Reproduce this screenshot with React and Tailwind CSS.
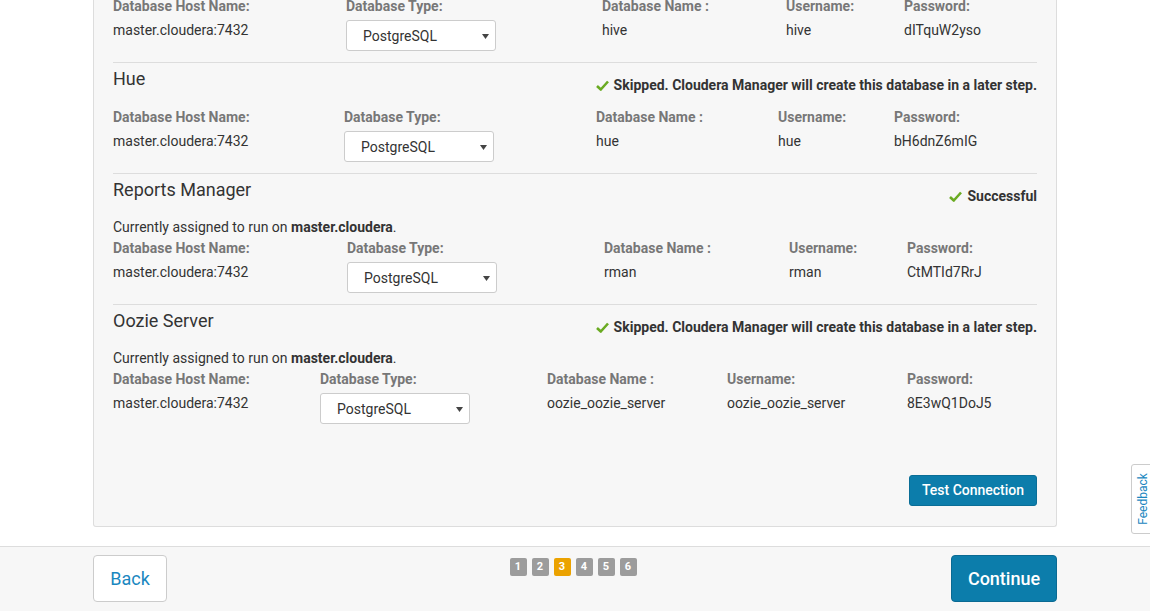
import { useState } from 'react';

const ROWS = [
  {
    key: 'hive',
    cols: 'grid-cols-[233px_256px_184px_118px_1fr]',
    host: 'master.cloudera:7432',
    name: 'hive', user: 'hive', password: 'dITquW2yso',
  },
  {
    key: 'hue',
    title: 'Hue',
    status: 'Skipped. Cloudera Manager will create this database in a later step.',
    cols: 'grid-cols-[231px_252px_182px_116px_1fr]',
    host: 'master.cloudera:7432',
    name: 'hue', user: 'hue', password: 'bH6dnZ6mIG',
  },
  {
    key: 'rman',
    title: 'Reports Manager',
    status: 'Successful',
    assigned: 'master.cloudera',
    cols: 'grid-cols-[234px_257px_185px_118px_1fr]',
    host: 'master.cloudera:7432',
    name: 'rman', user: 'rman', password: 'CtMTId7RrJ',
  },
  {
    key: 'oozie',
    title: 'Oozie Server',
    status: 'Skipped. Cloudera Manager will create this database in a later step.',
    assigned: 'master.cloudera',
    cols: 'grid-cols-[207px_227px_180px_180px_1fr]',
    host: 'master.cloudera:7432',
    name: 'oozie_oozie_server', user: 'oozie_oozie_server', password: '8E3wQ1DoJ5',
  },
];

function Check() {
  return (
    <svg width="13" height="11" viewBox="0 0 13 11" className="mr-[5px] shrink-0">
      <path d="M1 6 L4.8 9.5 L12 1.5" fill="none" stroke="#6aab22" strokeWidth="2.6" strokeLinejoin="round" />
    </svg>
  );
}

function Select() {
  const [value] = useState('PostgreSQL');
  return (
    <div className="w-[150px] h-[31px] bg-white border border-[#cccccc] rounded-[3px] flex items-center justify-between pl-[16px] pr-[6px] pt-[1px] text-[#333]">
      <span className="text-[14px]">{value}</span>
      <svg width="7" height="5" viewBox="0 0 7 5"><path d="M0 0 H7 L3.5 5 Z" fill="#444" /></svg>
    </div>
  );
}

function Fields({ row, first }) {
  const label = 'text-[#777] font-bold leading-[20px]';
  return (
    <div className={`grid ${row.cols} gap-y-[4px] ${first ? '-mt-[4px]' : ''}`}>
      <div className={label}>Database Host Name:</div>
      <div className={label}>Database Type:</div>
      <div className={label}>Database Name :</div>
      <div className={label}>Username:</div>
      <div className={label}>Password:</div>
      <div className="leading-[20px]">{row.host}</div>
      <div><Select /></div>
      <div className="leading-[20px]">{row.name}</div>
      <div className="leading-[20px]">{row.user}</div>
      <div className="leading-[20px]">{row.password}</div>
    </div>
  );
}

function Section({ row, first }) {
  return (
    <div className={first ? 'pb-[11px]' : 'border-t border-[#dddddd] pt-[4px] pb-[11px]'}>
      {row.title && (
        <div className={`flex justify-between items-start ${row.assigned ? 'mb-[11px]' : 'mb-[12px]'}`}>
          <h3 className="text-[18px] leading-[24px] text-[#333]">{row.title}</h3>
          <div className="mt-[8px] flex items-center font-bold leading-[20px] text-[#333]">
            <Check />
            {row.status}
          </div>
        </div>
      )}
      {row.assigned && (
        <p className="leading-[20px] mb-[1px]">
          Currently assigned to run on <span className="font-bold">{row.assigned}</span>.
        </p>
      )}
      <Fields row={row} first={first} />
    </div>
  );
}

export default function App() {
  const steps = [1, 2, 3, 4, 5, 6];
  return (
    <div className="relative h-[611px] overflow-hidden bg-white text-[14px] text-[#333] font-['Roboto','Liberation_Sans',sans-serif]">
      <div className="w-[964px] mx-auto">
        <div className="bg-[#f7f7f7] border border-t-0 border-[#dddddd] rounded-b-[3px] px-[19px] pb-[20px]">
          {ROWS.map((r, i) => (
            <Section key={r.key} row={r} first={i === 0} />
          ))}
          <div className="flex justify-end mt-[40px]">
            <button className="h-[31px] w-[128px] bg-[#0c7dab] border border-[#0a6e97] rounded-[3px] text-white font-medium text-[14px]">
              Test Connection
            </button>
          </div>
        </div>
      </div>

      {/* Wizard footer */}
      <div className="mt-[19px] border-t border-[#dddddd] bg-[#f7f7f7] h-[65px]">
        <div className="w-[964px] mx-auto pt-[8px] grid grid-cols-[1fr_auto_1fr] items-start">
          <button className="h-[47px] w-[74px] bg-white border border-[#cccccc] rounded-[4px] text-[18px] text-[#1a87c0]">
            Back
          </button>
          <div className="flex gap-[5px] mt-[3px] -ml-[2px] mr-[2px]">
            {steps.map(s => (
              <span
                key={s}
                className={`w-[17px] h-[18px] rounded-[2px] flex items-center justify-center text-[11px] font-bold text-white ${s === 3 ? 'bg-[#eba200]' : 'bg-[#9c9c9c]'}`}
              >
                {s}
              </span>
            ))}
          </div>
          <button className="justify-self-end h-[47px] w-[106px] bg-[#0c7dab] border border-[#0a6a93] rounded-[4px] text-[18px] font-medium text-white">
            Continue
          </button>
        </div>
      </div>

      {/* Feedback tab */}
      <div className="absolute left-[1131px] top-[464px] w-[24px] h-[70px] bg-white border border-[#cccccc] rounded-l-[3px] flex items-center justify-center">
        <span className="-rotate-90 text-[12px] text-[#1a87c0] whitespace-nowrap">Feedback</span>
      </div>
    </div>
  );
}
